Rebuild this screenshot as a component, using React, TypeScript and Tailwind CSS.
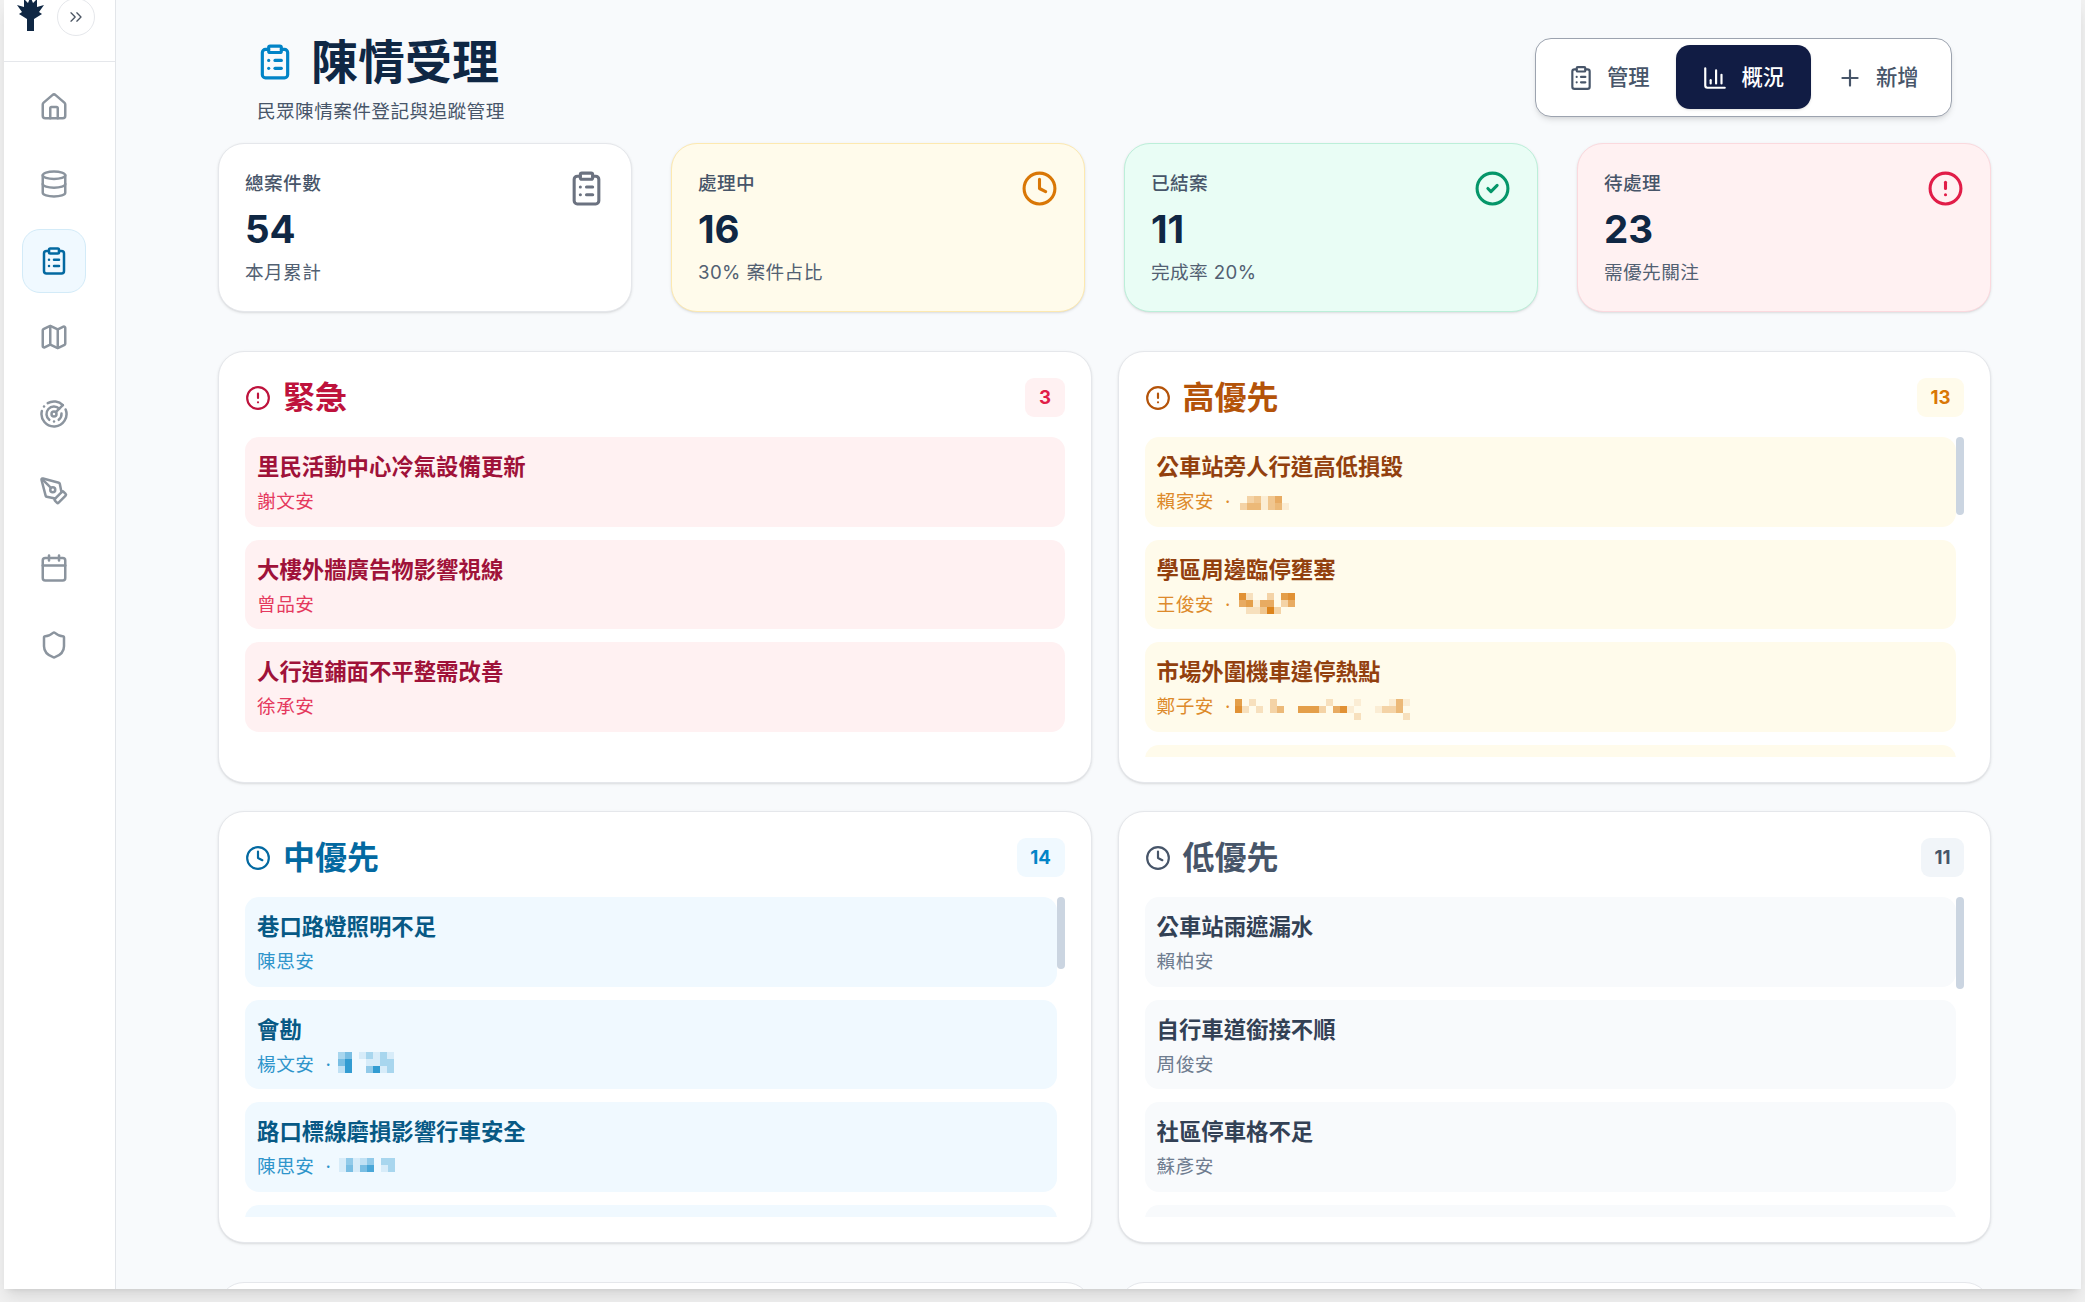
import {
  Calendar,
  ChartColumn,
  ChevronsRight,
  CircleAlert,
  CircleCheck,
  ClipboardList,
  Clock,
  Database,
  House,
  Map as MapIcon,
  PenTool,
  Plus,
  Radar,
  Shield,
} from "lucide-react"
import type { LucideIcon } from "lucide-react"

type Blur = { color: string; rows: string[]; className: string }
type Case = { title: string; name: string; blur?: Blur }

const amber = "#d97706"
const sky = "#0284c7"

const navItems: { icon: LucideIcon; active?: boolean }[] = [
  { icon: House },
  { icon: Database },
  { icon: ClipboardList, active: true },
  { icon: MapIcon },
  { icon: Radar },
  { icon: PenTool },
  { icon: Calendar },
  { icon: Shield },
]

const stats = [
  { label: "總案件數", value: "54", note: "本月累計", icon: ClipboardList, card: "bg-white border-[#e5e7eb]", tint: "text-[#6b7280]" },
  { label: "處理中", value: "16", note: "30% 案件占比", icon: Clock, card: "bg-[#fffbeb] border-[#fde9b0]", tint: "text-[#d97706]" },
  { label: "已結案", value: "11", note: "完成率 20%", icon: CircleCheck, card: "bg-[#e9fdf5] border-[#bcefd9]", tint: "text-[#059669]" },
  { label: "待處理", value: "23", note: "需優先關注", icon: CircleAlert, card: "bg-[#fff1f2] border-[#fbd9de]", tint: "text-[#e11d48]" },
]

const panels = [
  {
    heading: "緊急",
    count: 3,
    items: [
      { title: "里民活動中心冷氣設備更新", name: "謝文安" },
      { title: "大樓外牆廣告物影響視線", name: "曾品安" },
      { title: "人行道鋪面不平整需改善", name: "徐承安" },
    ] as Case[],
    icon: CircleAlert,
    headingColor: "text-[#be123c]",
    badge: "bg-[#fff1f2] text-[#e11d48]",
    row: "bg-[#fff1f2]",
    rowTitle: "text-[#9f1239]",
    rowName: "text-[#e5395e]",
  },
  {
    heading: "高優先",
    count: 13,
    items: [
      {
        title: "公車站旁人行道高低損毀",
        name: "賴家安",
        blur: { color: amber, className: "mt-[8px] ml-[8px]", rows: ["0341460", "3551451"] },
      },
      {
        title: "學區周邊臨停壅塞",
        name: "王俊安",
        blur: { color: amber, className: "mt-[2px] ml-[7px]", rows: ["82003078", "67166036", "02249300"] },
      },
      {
        title: "市場外圍機車違停熱點",
        name: "鄭子安",
        blur: {
          color: amber,
          className: "mt-[6px] ml-[3px]",
          rows: ["7020030000000200010000151", "8202035007773068100013350", "0000000000000000020000002"],
        },
      },
    ] as Case[],
    icon: CircleAlert,
    headingColor: "text-[#b45309]",
    badge: "bg-[#fffbeb] text-[#d97706]",
    row: "bg-[#fffbeb]",
    rowTitle: "text-[#92400e]",
    rowName: "text-[#dd8a2b]",
  },
  {
    heading: "中優先",
    count: 14,
    items: [
      { title: "巷口路燈照明不足", name: "陳思安" },
      {
        title: "會勘",
        name: "楊文安",
        blur: { color: sky, className: "mt-[1px] ml-[6px]", rows: ["35013131", "58001133", "28004813"] },
      },
      {
        title: "路口標線磨損影響行車安全",
        name: "陳思安",
        blur: { color: sky, className: "mt-[5px] ml-[7px]", rows: ["14124033", "15157013"] },
      },
    ] as Case[],
    icon: Clock,
    headingColor: "text-[#0369a1]",
    badge: "bg-[#f0f9ff] text-[#0284c7]",
    row: "bg-[#f0f9ff]",
    rowTitle: "text-[#075985]",
    rowName: "text-[#2f95cb]",
  },
  {
    heading: "低優先",
    count: 11,
    items: [
      { title: "公車站雨遮漏水", name: "賴柏安" },
      { title: "自行車道銜接不順", name: "周俊安" },
      { title: "社區停車格不足", name: "蘇彥安" },
    ] as Case[],
    icon: Clock,
    headingColor: "text-[#475569]",
    badge: "bg-[#f1f5f9] text-[#475569]",
    row: "bg-[#f8fafc]",
    rowTitle: "text-[#334155]",
    rowName: "text-[#6f7d90]",
  },
]

const LIST_HEIGHT = 320
const ROW_PITCH = 102.6

// 打碼的地點文字
function BlurBlock({ blur }: { blur: Blur }) {
  const cell = 7
  return (
    <svg
      className={`shrink-0 self-start ${blur.className}`}
      width={blur.rows[0].length * cell}
      height={blur.rows.length * cell}
    >
      {blur.rows.map((row, y) =>
        row.split("").map((level, x) => (
          <rect
            key={`${x}-${y}`}
            x={x * cell}
            y={y * cell}
            width={cell}
            height={cell}
            fill={blur.color}
            opacity={Number(level) / 10}
          />
        ))
      )}
    </svg>
  )
}

function Logo() {
  return (
    <svg className="h-[31px] w-[27px] shrink-0" viewBox="0 0 27 31" fill="#0f2744">
      <path d="M13.5-3 16 3l4-4v8l7-2-5 7 3 2-8 5v12h-7V19l-8-5 3-2-5-7 7 2v-8l4 4z" />
    </svg>
  )
}

function Sidebar() {
  return (
    <aside className="h-full w-[112px] shrink-0 border-r border-[#e2e5e9] bg-white">
      <div className="flex h-[62px] items-start gap-[13px] border-b border-[#e5e7eb] pl-[13px]">
        <Logo />
        <button className="-mt-[2px] flex h-[38px] w-[38px] items-center justify-center rounded-full border border-[#e5e7eb] bg-white text-[#4b5563]">
          <ChevronsRight size={20} strokeWidth={1.6} />
        </button>
      </div>
      <nav className="flex flex-col gap-[12.8px] pl-[18px] pt-[13px]">
        {navItems.map(({ icon: Icon, active }, i) => (
          <div
            key={i}
            className={
              active
                ? "flex h-[64px] w-[64px] items-center justify-center rounded-[18px] border border-[#d3ebf8] bg-[#f0f9ff] text-[#0369a1]"
                : "flex h-[64px] w-[64px] items-center justify-center text-[#8b949e]"
            }
          >
            <Icon size={30} strokeWidth={2} />
          </div>
        ))}
      </nav>
    </aside>
  )
}

function Header() {
  return (
    <header className="mb-[17px] flex items-start justify-between pl-[38px] pr-[39px]">
      <div>
        <div className="flex h-[65px] items-center gap-[17px]">
          <ClipboardList size={38} strokeWidth={2} className="text-[#0284c7]" />
          <h1 className="text-[47px] font-bold leading-none text-[#0f2744]">陳情受理</h1>
        </div>
        <p className="mt-[4px] pl-px text-[18.67px] leading-[28px] tracking-[0.4px] text-[#475569]">民眾陳情案件登記與追蹤管理</p>
      </div>
      <div className="mt-[9px] flex h-[79px] rounded-[16px] border border-[#9ca3af] bg-white px-[6px] pb-[7px] pt-[6px] shadow-md">
        <button className="flex h-[64px] w-[134.5px] items-center justify-center gap-[13px] rounded-[14px] pt-[2px] text-[21.33px] font-medium text-[#475569]">
          <ClipboardList size={26} strokeWidth={2} />
          管理
        </button>
        <button className="flex h-[64px] w-[134.5px] items-center justify-center gap-[13px] rounded-[14px] bg-[#111c44] pt-[2px] text-[21.33px] font-medium text-white shadow-sm">
          <ChartColumn size={26} strokeWidth={2} />
          概況
        </button>
        <button className="flex h-[64px] w-[134.5px] items-center justify-center gap-[13px] rounded-[14px] pt-[2px] text-[21.33px] font-medium text-[#475569]">
          <Plus size={26} strokeWidth={2} />
          新增
        </button>
      </div>
    </header>
  )
}

function StatCards() {
  return (
    <section className="mb-[39px] grid grid-cols-4 gap-[39px]">
      {stats.map((s) => (
        <div key={s.label} className={`flex justify-between rounded-[26px] border px-[26px] pb-[24px] pt-[26px] shadow-sm ${s.card}`}>
          <div>
            <p className="text-[18.67px] font-medium leading-[28px] tracking-[0.4px] text-[#475569]">{s.label}</p>
            <p className="mt-[7px] text-[38.5px] font-bold leading-[48px] text-[#0f2744]">{s.value}</p>
            <p className="mt-[6px] text-[18.67px] leading-[28px] tracking-[0.4px] text-[#526072]">{s.note}</p>
          </div>
          <s.icon size={37} strokeWidth={2} className={s.tint} />
        </div>
      ))}
    </section>
  )
}

function PriorityPanel({ panel }: { panel: (typeof panels)[number] }) {
  const Icon = panel.icon
  const scrolls = panel.count > panel.items.length
  // 捲軸長度依案件總數計算
  const thumbHeight = (LIST_HEIGHT * LIST_HEIGHT) / (panel.count * ROW_PITCH - 13)
  return (
    <div className="h-[432px] rounded-[26px] border border-[#e5e7eb] bg-white p-[26px] shadow-sm">
      <div className="mb-[20px] flex h-[39px] items-center justify-between">
        <h2 className={`flex items-center gap-[12px] text-[32px] font-semibold leading-none ${panel.headingColor}`}>
          <Icon size={26} strokeWidth={2} />
          {panel.heading}
        </h2>
        <span className={`flex h-[39px] items-center rounded-[9px] px-[13.5px] text-[18.67px] font-bold ${panel.badge}`}>
          {panel.count}
        </span>
      </div>
      <div className={`relative flex h-[320px] flex-col gap-[13px] overflow-hidden ${scrolls ? "pr-[8px]" : ""}`}>
        {panel.items.map((item) => (
          <div key={item.title} className={`shrink-0 rounded-[14px] pb-[10.3px] pl-[12px] pr-[13px] pt-[13.3px] ${panel.row}`}>
            <p className={`text-[22.4px] font-semibold leading-[34px] ${panel.rowTitle}`}>{item.title}</p>
            <div className={`mt-[4px] flex h-[28px] items-center text-[18.67px] leading-[28px] tracking-[0.5px] ${panel.rowName}`}>
              <span>{item.name}</span>
              {item.blur && (
                <>
                  <span className="ml-[10px] w-[8px] text-center">·</span>
                  <BlurBlock blur={item.blur} />
                </>
              )}
            </div>
          </div>
        ))}
        {scrolls && <div className={`h-[90px] shrink-0 rounded-[14px] ${panel.row}`} />}
        {scrolls && (
          <div className="absolute right-0 top-0 w-[8px] rounded-full bg-[#cbd5e1]" style={{ height: thumbHeight }} />
        )}
      </div>
    </div>
  )
}

export default function App() {
  return (
    <div className="h-[1302px] w-[2085px] overflow-hidden bg-[#f0f0f0] font-['Inter','Noto_Sans_CJK_TC',sans-serif]">
      <div className="ml-[4px] flex h-[1289px] w-[2077px] overflow-hidden bg-[#f8fafc] shadow-lg">
        <Sidebar />
        <main className="min-w-0 flex-1 pl-[102px] pr-[90px] pt-[29px]">
          <Header />
          <StatCards />
          <section className="grid grid-cols-2 gap-x-[26px] gap-y-[28px]">
            {panels.map((panel) => (
              <PriorityPanel key={panel.heading} panel={panel} />
            ))}
          </section>
          {/* 下一區塊只露出上緣 */}
          <section className="mt-[39px] grid grid-cols-2 gap-x-[26px]">
            <div className="h-[432px] rounded-[26px] border border-[#e5e7eb] bg-white" />
            <div className="h-[432px] rounded-[26px] border border-[#e5e7eb] bg-white" />
          </section>
        </main>
      </div>
    </div>
  )
}
